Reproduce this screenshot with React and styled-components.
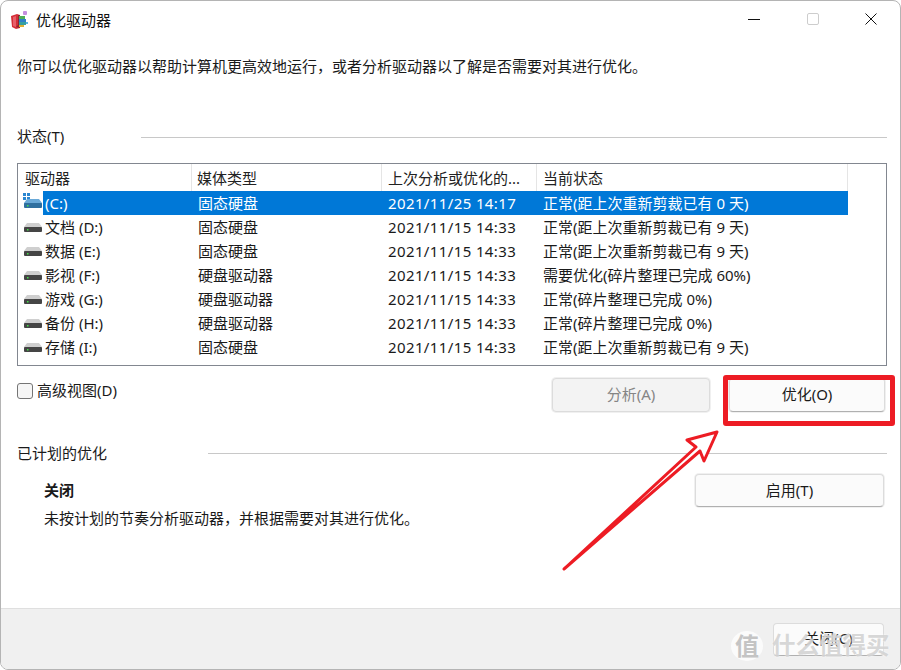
import styled, { createGlobalStyle } from "styled-components";

const GlobalStyle = createGlobalStyle`
  html, body {
    margin: 0;
    padding: 0;
    background: #fff;
  }
  body {
    font-family: "Noto Sans", "Noto Sans CJK SC", sans-serif;
    font-size: 15px;
    line-height: 20px;
    color: #1a1a1a;
  }
`;

const Window = styled.div`
  position: relative;
  box-sizing: border-box;
  width: 901px;
  height: 670px;
  display: flex;
  flex-direction: column;
  overflow: hidden;
  background: #fff;
  border: 1px solid #b4b4b4;
  border-radius: 8px;
`;

const TitleBar = styled.div`
  height: 38px;
  display: flex;
  align-items: center;
  padding-left: 10px;
  gap: 7px;
`;

const Title = styled.div`
  flex: 1;
  color: #111;
`;

const WindowControls = styled.div`
  display: flex;
  align-items: center;
  margin-right: 23px;
  margin-bottom: 2px;
  gap: 46.5px;
`;

const Main = styled.main`
  flex: 1;
  padding: 17px 13px 0 16px;
`;

const Intro = styled.p`
  margin: 0;
`;

const SectionHead = styled.div`
  display: flex;
  align-items: flex-start;
  gap: ${(p) => p.$gap}px;
  margin-top: ${(p) => p.$top}px;
`;

const SectionRule = styled.div`
  flex: 1;
  height: 1px;
  margin-top: ${(p) => p.$drop}px;
  background: #c8c8c8;
`;

const ListBox = styled.div`
  box-sizing: border-box;
  height: 203px;
  margin-top: 17px;
  border: 1px solid #828790;
`;

const columns = "25px 148px 191px 155px 311px";

const HeaderRow = styled.div`
  display: grid;
  grid-template-columns: 25px 149px 190px 155px 311px;
  height: 27px;
  width: 830px;
`;

const HeaderCell = styled.div`
  box-sizing: border-box;
  grid-column: ${(p) => (p.$first ? "1 / span 2" : "auto")};
  padding-left: ${(p) => p.$pad}px;
  padding-top: 4px;
  border-right: 1px solid #e5e5e5;
  color: #222;
`;

const DriveRow = styled.div`
  display: grid;
  grid-template-columns: ${columns};
  height: 24px;
  width: 830px;
  align-items: stretch;
`;

const IconCell = styled.div`
  display: flex;
  align-items: flex-start;
  padding-left: 5px;
`;

const Cell = styled.div`
  box-sizing: border-box;
  line-height: 24px;
  padding-left: ${(p) => p.$pad}px;
  white-space: nowrap;
  letter-spacing: ${(p) => p.$spread || 0}px;
  background: ${(p) => (p.$selected ? "#0078d7" : "transparent")};
  color: ${(p) => (p.$selected ? "#fff" : "#1a1a1a")};
`;

const ActionRow = styled.div`
  display: flex;
  align-items: flex-start;
  margin-top: 12px;
  padding-right: 2px;
`;

const CheckLabel = styled.label`
  flex: 1;
  display: flex;
  align-items: center;
  gap: 4px;
  margin-top: 2px;
`;

const CheckBox = styled.span`
  box-sizing: border-box;
  width: 16px;
  height: 16px;
  margin-top: 2px;
  background: #f6f6f6;
  border: 1px solid #757575;
  border-radius: 3px;
`;

const Button = styled.button`
  box-sizing: border-box;
  width: ${(p) => p.$width}px;
  height: ${(p) => p.$height}px;
  margin-left: ${(p) => p.$left || 0}px;
  padding: 0 0 2px;
  font: inherit;
  color: ${(p) => (p.disabled ? "#858585" : "#1a1a1a")};
  background: ${(p) => (p.disabled ? "#f3f3f3" : "#fbfbfb")};
  border: 1px solid #dcdcdc;
  border-bottom-color: ${(p) => (p.disabled ? "#dcdcdc" : "#b0b0b0")};
  border-radius: 4px;
  box-shadow: 0 0 0 1px #f0f0f0;
`;

const ScheduleRow = styled.div`
  display: flex;
  align-items: flex-start;
  justify-content: space-between;
  margin-top: 11px;
  padding-left: 27px;
  padding-right: 3px;
`;

const ScheduleText = styled.div`
  display: flex;
  flex-direction: column;
  gap: 8px;
  padding-top: 6px;
`;

const StrongText = styled.div`
  font-weight: 700;
`;

const Footer = styled.footer`
  height: 60px;
  display: flex;
  align-items: center;
  justify-content: flex-end;
  padding-right: 16px;
  background: #f0f0f0;
  border-top: 1px solid #dfdfdf;
`;

const HighlightBox = styled.div`
  position: absolute;
  left: 722px;
  top: 374px;
  width: 172px;
  height: 51px;
  box-sizing: border-box;
  border: 5px solid #ed1c24;
  border-radius: 3px;
`;

const ArrowLayer = styled.svg`
  position: absolute;
  left: 550px;
  top: 420px;
`;

const WatermarkBadge = styled.div`
  position: absolute;
  left: 730px;
  top: 630px;
  width: 32px;
  height: 30px;
  border-radius: 50%;
  display: flex;
  align-items: center;
  justify-content: center;
  background: #fbfbfb;
  color: #c4c4c4;
  font-size: 24px;
  font-weight: 700;
`;

const WatermarkText = styled.div`
  position: absolute;
  left: 771px;
  top: 630px;
  font-size: 23.5px;
  line-height: 28px;
  font-weight: 700;
  white-space: nowrap;
  color: rgba(205, 205, 205, 0.8);
  text-shadow: 0 0 2px rgba(255, 255, 255, 0.8);
`;

function AppIcon() {
  return (
    <svg width="18" height="19" viewBox="0 0 18 19">
      <path d="M0 5 L6 3 L9 4 L9 17 L5 18 L1 16 Z" fill="#d42f38" />
      <path d="M2 6 L5 5 L5 16 L2 15 Z" fill="#e8606a" />
      <path d="M5 16 L9 17 L9 4 L7 4 L7 14 Z" fill="#8e2530" />
      <rect x="8" y="5" width="6" height="3" fill="#4fae58" />
      <rect x="8" y="8" width="7" height="3" fill="#2f7fc8" />
      <rect x="8" y="11" width="7" height="3" fill="#37a0a0" />
      <rect x="8" y="14" width="5" height="2" fill="#e0b030" />
      <rect x="12" y="0" width="4" height="4" rx="1" fill="#c58ee0" />
      <rect x="15" y="11" width="2" height="2" fill="#59b6e6" />
    </svg>
  );
}

function MinimizeIcon() {
  return (
    <svg width="12" height="12" viewBox="0 0 12 12">
      <path d="M0 6.5 H12" stroke="#111" strokeWidth="1" />
    </svg>
  );
}

function MaximizeIcon() {
  return (
    <svg width="12" height="12" viewBox="0 0 12 12">
      <rect x="0.5" y="0.5" width="11" height="11" rx="1.5" fill="none" stroke="#cdcdcd" />
    </svg>
  );
}

function CloseIcon() {
  return (
    <svg width="12" height="12" viewBox="0 0 12 12">
      <path d="M0.5 0.5 L11.5 11.5 M11.5 0.5 L0.5 11.5" stroke="#111" strokeWidth="1" />
    </svg>
  );
}

function DriveIcon({ system }) {
  return (
    <svg width="20" height="24" viewBox="0 0 20 24">
      {system && (
        <g fill="#2a86d0">
          <rect x="0" y="2" width="3" height="3" />
          <rect x="4" y="2" width="3" height="3" />
          <rect x="0" y="6" width="3" height="3" />
          <rect x="4" y="6" width="3" height="3" />
        </g>
      )}
      <path d="M4 8 H16 L19 12 V13 H1 V12 Z" fill={system ? "#6aa9d8" : "#cfcfcf"} />
      <rect x="1" y="12" width="18" height="5" rx="1" fill={system ? "#2f6f9f" : "#454545"} />
      <rect x="4" y="14" width="1.5" height="1.5" fill="#45e04a" />
    </svg>
  );
}

const drives = [
  { name: "(C:)", type: "固态硬盘", date: "2021/11/25 14:17", state: "正常(距上次重新剪裁已有 0 天)", system: true },
  { name: "文档 (D:)", type: "固态硬盘", date: "2021/11/15 14:33", state: "正常(距上次重新剪裁已有 9 天)" },
  { name: "数据 (E:)", type: "固态硬盘", date: "2021/11/15 14:33", state: "正常(距上次重新剪裁已有 9 天)" },
  { name: "影视 (F:)", type: "硬盘驱动器", date: "2021/11/15 14:33", state: "需要优化(碎片整理已完成 60%)" },
  { name: "游戏 (G:)", type: "硬盘驱动器", date: "2021/11/15 14:33", state: "正常(碎片整理已完成 0%)" },
  { name: "备份 (H:)", type: "硬盘驱动器", date: "2021/11/15 14:33", state: "正常(碎片整理已完成 0%)" },
  { name: "存储 (I:)", type: "固态硬盘", date: "2021/11/15 14:33", state: "正常(距上次重新剪裁已有 9 天)" },
];

export default function App() {
  return (
    <>
      <GlobalStyle />
      <Window>
        <TitleBar>
          <AppIcon />
          <Title>优化驱动器</Title>
          <WindowControls>
            <MinimizeIcon />
            <MaximizeIcon />
            <CloseIcon />
          </WindowControls>
        </TitleBar>

        <Main>
          <Intro>你可以优化驱动器以帮助计算机更高效地运行，或者分析驱动器以了解是否需要对其进行优化。</Intro>

          <SectionHead $top={50} $gap={77}>
            <span>状态(T)</span>
            <SectionRule $drop={11} />
          </SectionHead>

          <ListBox>
            <HeaderRow>
              <HeaderCell $first $pad={7}>驱动器</HeaderCell>
              <HeaderCell $pad={5}>媒体类型</HeaderCell>
              <HeaderCell $pad={6}>上次分析或优化的...</HeaderCell>
              <HeaderCell $pad={6}>当前状态</HeaderCell>
            </HeaderRow>
            {drives.map((d) => (
              <DriveRow key={d.name}>
                <IconCell>
                  <DriveIcon system={d.system} />
                </IconCell>
                <Cell $pad={2} $selected={d.system}>{d.name}</Cell>
                <Cell $pad={7} $selected={d.system}>{d.type}</Cell>
                <Cell $pad={6} $spread={0.38} $selected={d.system}>{d.date}</Cell>
                <Cell $pad={6} $selected={d.system}>{d.state}</Cell>
              </DriveRow>
            ))}
          </ListBox>

          <ActionRow>
            <CheckLabel>
              <CheckBox />
              高级视图(D)
            </CheckLabel>
            <Button disabled $width={158} $height={34}>分析(A)</Button>
            <Button $width={156} $height={34} $left={19}>优化(O)</Button>
          </ActionRow>

          <SectionHead $top={31} $gap={101}>
            <span>已计划的优化</span>
            <SectionRule $drop={10} />
          </SectionHead>

          <ScheduleRow>
            <ScheduleText>
              <StrongText>关闭</StrongText>
              <div>未按计划的节奏分析驱动器，并根据需要对其进行优化。</div>
            </ScheduleText>
            <Button $width={189} $height={33}>启用(T)</Button>
          </ScheduleRow>
        </Main>

        <Footer>
          <Button $width={111} $height={33}>关闭(C)</Button>
        </Footer>

        <HighlightBox />
        <ArrowLayer width="180" height="160" viewBox="550 420 180 160">
          <path
            d="M563 568 L695 446 L686 439 L716 431 L703 460 L699 450 Z"
            fill="#fff"
            stroke="#ed1c24"
            strokeWidth="3"
            strokeLinejoin="round"
          />
        </ArrowLayer>
        <WatermarkBadge>值</WatermarkBadge>
        <WatermarkText>什么值得买</WatermarkText>
      </Window>
    </>
  );
}
